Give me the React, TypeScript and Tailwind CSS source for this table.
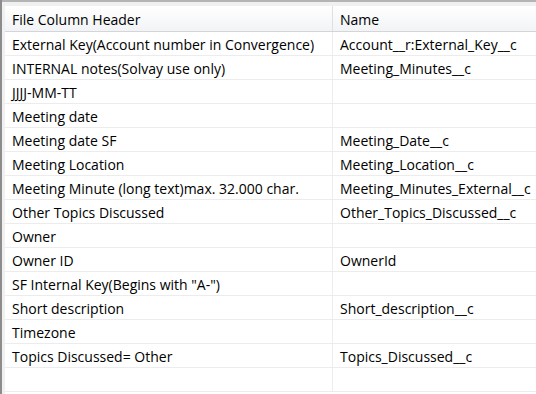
const rows: [string, string][] = [
  ['External Key(Account number in Convergence)', 'Account__r:External_Key__c'],
  ['INTERNAL notes(Solvay use only)', 'Meeting_Minutes__c'],
  ['JJJJ-MM-TT', ''],
  ['Meeting date', ''],
  ['Meeting date SF', 'Meeting_Date__c'],
  ['Meeting Location', 'Meeting_Location__c'],
  ['Meeting Minute (long text)max. 32.000 char.', 'Meeting_Minutes_External__c'],
  ['Other Topics Discussed', 'Other_Topics_Discussed__c'],
  ['Owner', ''],
  ['Owner ID', 'OwnerId'],
  ['SF Internal Key(Begins with "A-")', ''],
  ['Short description', 'Short_description__c'],
  ['Timezone', ''],
  ['Topics Discussed= Other', 'Topics_Discussed__c'],
  ['', ''],
];

export default function App() {
  return (
    <div
      className="flex h-[394px] w-[536px] overflow-hidden bg-[#f0f0f0] text-[14px] text-black"
      style={{ fontFamily: '"Segoe UI", "Open Sans", sans-serif' }}
    >
      <div className="w-[2px] shrink-0 bg-[#8c8c8c]" />
      <div className="flex min-w-0 flex-1 flex-col">
        <div className="h-[2px] shrink-0 bg-[#b4b4b4]" />
        <div className="ml-[3px] mt-[4px] flex min-h-0 flex-1 flex-col bg-white">
          <div className="flex h-[26px] shrink-0 border-b border-[#d5d5d5] bg-gradient-to-b from-white to-[#f1f3f6]">
            <div className="flex w-[328px] shrink-0 items-center border-r border-[#e0e0e0] pl-[7px] pt-[2px]">
              File Column Header
            </div>
            <div className="flex items-center pl-[7px] pt-[2px]">Name</div>
          </div>
          {rows.map(([a, b], i) => (
            <div key={i} className="flex h-[24px] shrink-0 border-b border-[#ececec]">
              <div className="flex w-[328px] shrink-0 items-center border-r border-[#ececec] pl-[7px] pt-[2px] whitespace-nowrap">
                {a}
              </div>
              <div className="flex items-center pl-[7px] pt-[2px] whitespace-nowrap">{b}</div>
            </div>
          ))}
        </div>
      </div>
    </div>
  );
}
